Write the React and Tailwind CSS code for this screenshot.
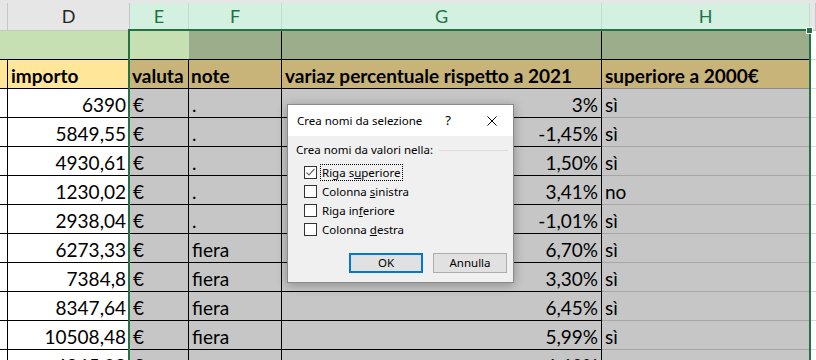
import React from 'react';

const sheetFont = { fontFamily: 'Lato, "Liberation Sans", sans-serif' };

// C (partial), D, E, F, G, H, I (partial)
const W = ['w-[8px]', 'w-[122px]', 'w-[59px]', 'w-[93px]', 'w-[320px]', 'w-[208px]', 'w-[6px]'];

const rows = [
  ['6390', '€', '.', '3%', 'sì'],
  ['5849,55', '€', '.', '-1,45%', 'sì'],
  ['4930,61', '€', '.', '1,50%', 'sì'],
  ['1230,02', '€', '.', '3,41%', 'no'],
  ['2938,04', '€', '.', '-1,01%', 'sì'],
  ['6273,33', '€', 'fiera', '6,70%', 'sì'],
  ['7384,8', '€', 'fiera', '3,30%', 'sì'],
  ['8347,64', '€', 'fiera', '6,45%', 'sì'],
  ['10508,48', '€', 'fiera', '5,99%', 'sì'],
  ['4965,08', '€', '', '6,60%', ''],
];

const Cell = ({ w, className = '', children }) => (
  <div className={`${w} shrink-0 h-full flex items-end pb-[1px] leading-[22px] whitespace-nowrap overflow-hidden ${className}`}>
    {children}
  </div>
);

const HeadCell = ({ w, sel, children }) => (
  <div
    className={`${w} shrink-0 h-full flex items-center justify-center text-[18px] ${
      sel
        ? 'bg-[#d3f0e0] text-[#217346] border-r border-[#c4dccd] border-b-2 border-b-[#217346]'
        : 'bg-[#e6e6e6] text-[#262626] border-r border-b border-[#c6c6c6]'
    }`}
  >
    {children}
  </div>
);

function Checkbox({ checked }) {
  return (
    <span className="w-[13px] h-[13px] border border-[#333333] bg-white flex items-center justify-center shrink-0">
      {checked && (
        <svg width="11" height="11" viewBox="0 0 11 11">
          <polyline points="1.5,5.5 4,8 9.5,2" fill="none" stroke="#6b6b6b" strokeWidth="1.2" />
        </svg>
      )}
    </span>
  );
}

function Dialog() {
  const opts = [
    { pre: 'Riga s', key: 'u', post: 'periore', checked: true },
    { pre: 'Colonna ', key: 's', post: 'inistra' },
    { pre: 'Riga in', key: 'f', post: 'eriore' },
    { pre: 'Colonna ', key: 'd', post: 'estra' },
  ];
  return (
    <div
      className="absolute left-[287px] top-[104px] w-[227px] h-[179px] border border-[#8a8a8a] bg-[#f0f0f0] shadow-[0_2px_10px_rgba(0,0,0,0.3)] text-[11.5px] text-black"
      style={{ fontFamily: '"Noto Sans", "Open Sans", sans-serif' }}
    >
      <div className="h-[31px] bg-white flex items-center pl-[9px]">
        <span>Crea nomi da selezione</span>
        <span className="ml-auto text-[13px]">?</span>
        <svg className="ml-[36px] mr-[16px]" width="10" height="10" viewBox="0 0 10 10">
          <path d="M0.5 0.5 L9.5 9.5 M9.5 0.5 L0.5 9.5" stroke="#000" strokeWidth="1" />
        </svg>
      </div>
      <div className="pl-[8px] pr-[5px]">
        <div className="flex items-center mt-[6px] h-[16px]">
          <span>Crea nomi da valori nella:</span>
          <span className="flex-1 h-px bg-[#dcdcdc] ml-[6px]" />
        </div>
        <div className="flex flex-col mt-[5px] pl-[8px]">
          {opts.map((o, i) => (
            <div key={i} className="h-[19px] flex items-center">
              <Checkbox checked={o.checked} />
              <span className={`ml-[4px] px-[1px] leading-[15px] ${o.checked ? 'outline outline-1 outline-dotted outline-black' : ''}`}>
                {o.pre}
                <span className="underline">{o.key}</span>
                {o.post}
              </span>
            </div>
          ))}
        </div>
      </div>
      <div className="flex justify-end gap-[10px] pr-[6px] mt-[14px]">
        <button className="w-[74px] h-[20px] bg-[#e1e1e1] border-2 border-[#0078d7] flex items-center justify-center">
          OK
        </button>
        <button className="w-[74px] h-[20px] bg-[#e1e1e1] border border-[#adadad] flex items-center justify-center">
          Annulla
        </button>
      </div>
    </div>
  );
}

export default function App() {
  return (
    <div className="relative w-[816px] h-[360px] overflow-hidden bg-white text-[19px] text-black" style={sheetFont}>
      {/* column letters */}
      <div className="h-[3px] bg-[#e6e6e6]" />
      <div className="flex h-[28px]">
        <HeadCell w={W[0]} />
        <HeadCell w={W[1]}>D</HeadCell>
        <HeadCell w={W[2]} sel>E</HeadCell>
        <HeadCell w={W[3]} sel>F</HeadCell>
        <HeadCell w={W[4]} sel>G</HeadCell>
        <HeadCell w={W[5]} sel>H</HeadCell>
        <HeadCell w={W[6]} />
      </div>

      {/* row 1 */}
      <div className="flex h-[29px]">
        <Cell w={W[0]} className="bg-[#c6e0b4] border-b border-black" />
        <Cell w={W[1]} className="bg-[#c6e0b4] border-b border-black" />
        <Cell w={W[2]} className="bg-[#c6e0b4] border-b border-black" />
        <Cell w={W[3]} className="bg-[#9cad8c] border-b border-r border-black" />
        <Cell w={W[4]} className="bg-[#9cad8c] border-b border-r border-black" />
        <Cell w={W[5]} className="bg-[#9cad8c] border-b border-black" />
        <Cell w={W[6]} className="bg-white border-b border-[#d9d9d9]" />
      </div>

      {/* row 2: titles */}
      <div className="flex h-[29px] font-bold">
        <Cell w={W[0]} className="bg-[#ffe699] border-b border-r border-black" />
        <Cell w={W[1]} className="bg-[#ffe699] border-b border-r border-black px-[3px]">importo</Cell>
        <Cell w={W[2]} className="bg-[#c8b479] border-b border-r border-black px-[2px]">valuta</Cell>
        <Cell w={W[3]} className="bg-[#c8b479] border-b border-r border-black px-[2px]">note</Cell>
        <Cell w={W[4]} className="bg-[#c8b479] border-b border-r border-black px-[3px]">variaz percentuale rispetto a 2021</Cell>
        <Cell w={W[5]} className="bg-[#c8b479] border-b border-[#8a8a8a] px-[3px]">superiore a 2000€</Cell>
        <Cell w={W[6]} className="bg-white border-b border-[#d9d9d9]" />
      </div>

      {rows.map((r, i) => (
        <div key={i} className="flex h-[29px]">
          <Cell w={W[0]} className="bg-white border-b border-r border-black" />
          <Cell w={W[1]} className="bg-white border-b border-r border-black justify-end px-[3px]">{r[0]}</Cell>
          <Cell w={W[2]} className="bg-[#c6c6c6] border-b border-r border-black px-[3px]">{r[1]}</Cell>
          <Cell w={W[3]} className="bg-[#c6c6c6] border-b border-r border-black px-[3px]">{r[2]}</Cell>
          <Cell w={W[4]} className="bg-[#c6c6c6] border-b border-r border-black justify-end px-[3px]">{r[3]}</Cell>
          <Cell w={W[5]} className="bg-[#c6c6c6] border-b border-[#a6a6a6] px-[3px]">{r[4]}</Cell>
          <Cell w={W[6]} className="bg-white border-b border-[#d9d9d9]" />
        </div>
      ))}

      {/* selection outline + handle */}
      <div className="absolute left-[128px] top-[29px] w-[683px] h-[360px] border-2 border-[#217346] pointer-events-none" />
      <div className="absolute left-[806px] top-[27px] w-[7px] h-[7px] bg-[#217346] border border-white" />

      <Dialog />
    </div>
  );
}
